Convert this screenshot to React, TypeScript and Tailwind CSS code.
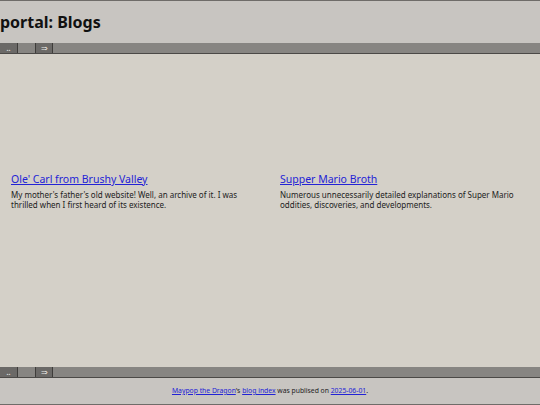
import React from "react";

function Bar() {
  return (
    <div className="flex h-[11px] bg-[#878582] border-b border-[#4b4947] items-stretch">
      <div className="w-[18px] bg-[#6b6967] border-r border-[#3e3c3a] flex items-center justify-center text-[#e8e6e2] text-[7px] leading-none font-bold">..</div>
      <div className="w-[17px]" />
      <div className="w-[18px] bg-[#6b6967] border-x border-[#3e3c3a] flex items-center justify-center text-[#eceae6] text-[8px] leading-none">⇒</div>
      <div className="flex-1" />
    </div>
  );
}

export default function App() {
  return (
    <div className="w-[540px] h-[405px] flex flex-col bg-[#d4d0c8] overflow-hidden" style={{ fontFamily: '"Noto Sans", sans-serif' }}>
      <div className="h-[43px] bg-[#c8c5c1] border-t border-[#6f6c69] flex items-center shrink-0">
        <h1 className="text-[16px] font-bold text-[#111] leading-none whitespace-nowrap pb-[1px]">portal: Blogs</h1>
      </div>
      <Bar />
      <div className="flex-1 grid grid-cols-2 content-start pt-[119px] px-[11px] gap-x-[20px]">
        <div>
          <a href="#" className="block text-[10.5px] text-[#2323d6] underline leading-[12px]">Ole' Carl from Brushy Valley</a>
          <p className="mt-[5px] text-[8px] leading-[10px] text-[#222]">My mother's father's old website! Well, an archive of it. I was thrilled when I first heard of its existence.</p>
        </div>
        <div>
          <a href="#" className="block text-[10.5px] text-[#2323d6] underline leading-[12px]">Supper Mario Broth</a>
          <p className="mt-[5px] text-[8px] leading-[10px] text-[#222]">Numerous unnecessarily detailed explanations of Super Mario oddities, discoveries, and developments.</p>
        </div>
      </div>
      <Bar />
      <div className="h-[27px] bg-[#c8c5c1] border-b border-[#6f6c69] flex items-center justify-center shrink-0 text-[6.8px] text-[#222]">
        <span>
          <a href="#" className="text-[#2323d6] underline">Maypop the Dragon</a>'s{" "}
          <a href="#" className="text-[#2323d6] underline">blog index</a> was publised on{" "}
          <a href="#" className="text-[#2323d6] underline">2025-06-01</a>.
        </span>
      </div>
    </div>
  );
}
